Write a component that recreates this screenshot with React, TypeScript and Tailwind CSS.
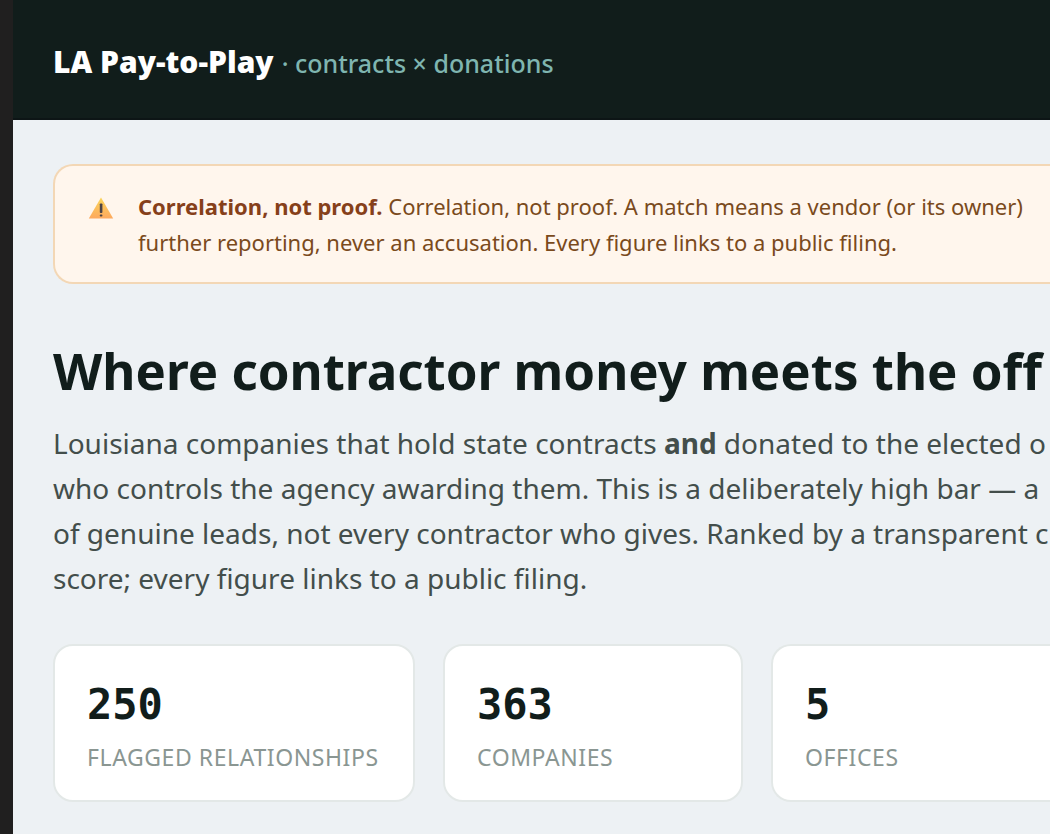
import React from "react";

const stats = [
  { value: "250", label: "FLAGGED RELATIONSHIPS", box: "min-w-[362px] shrink-0 rounded-[20px] border-2" },
  { value: "363", label: "COMPANIES", box: "min-w-[300px] shrink-0 rounded-[20px] border-2" },
  { value: "5", label: "OFFICES", box: "grow rounded-l-[20px] border-2 border-r-0" },
];

function WarningIcon() {
  return (
    <svg viewBox="0 0 26 22" className="mt-[9px] h-[22px] w-[26px] shrink-0" aria-hidden="true">
      <defs>
        <linearGradient id="warn" x1="0" y1="0" x2="0" y2="1">
          <stop offset="0" stopColor="#fbd55a" />
          <stop offset="1" stopColor="#fda95e" />
        </linearGradient>
      </defs>
      <path d="M13 0.5 L25.2 21.5 H0.8 Z" fill="url(#warn)" />
      <rect x="11.8" y="6.5" width="2.6" height="9.5" rx="0.8" fill="#4b4346" />
      <rect x="11.8" y="17.4" width="2.6" height="2.2" rx="0.8" fill="#4b4346" />
    </svg>
  );
}

export default function App() {
  return (
    <div className="flex min-h-screen w-full overflow-hidden bg-[#edf1f4] font-['Noto_Sans',sans-serif]">
      <div className="w-[13px] shrink-0 bg-[#201f1f]"></div>

      <div className="flex min-w-0 grow flex-col">
        <header className="flex h-[120px] items-center border-b-2 border-[#0d1516] bg-[#111d1b] pl-10 pt-1">
          <div className="flex items-baseline gap-2 whitespace-nowrap">
            <span className="text-[30px] font-black text-white">LA Pay-to-Play</span>
            <span className="text-[25px] font-medium text-[#7fb5b0]">· contracts × donations</span>
          </div>
        </header>

        <main className="overflow-hidden whitespace-nowrap pl-10 pt-11">
          <div className="flex gap-6 rounded-l-[20px] border-2 border-r-0 border-[#f3d7b5] bg-[#fff6ed] px-[33px] py-[22px]">
            <WarningIcon />
            <p className="text-[22px] leading-9 text-[#7a4a1c]">
              <strong className="font-bold text-[#86401a]">Correlation, not proof.</strong>{" "}
              Correlation, not proof. A match means a vendor (or its owner)
              <br />
              further reporting, never an accusation. Every figure links to a public filing.
            </p>
          </div>

          <h1 className="mt-[50px] text-[51px] font-bold leading-[72px] text-[#111d1b]">
            Where contractor money meets the off
          </h1>

          <p className="mt-[15px] text-[28px] leading-[45px] text-[#434e4b]">
            Louisiana companies that hold state contracts <strong className="font-bold">and</strong> donated to the elected o
            <br />
            who controls the agency awarding them. This is a deliberately high bar — a
            <br />
            of genuine leads, not every contractor who gives. Ranked by a transparent c
            <br />
            score; every figure links to a public filing.
          </p>

          {/* stat cards */}
          <div className="mt-[43px] flex gap-7">
            {stats.map((s) => (
              <div key={s.label} className={`${s.box} h-[158px] border-[#e3e8e7] bg-white px-8 pt-8`}>
                <div className="font-['DejaVu_Sans_Mono',monospace] text-[42px] font-bold leading-[54px] text-[#111d1b]">
                  {s.value}
                </div>
                <div className="text-[23px] leading-[50px] tracking-wide text-[#8a9692]">{s.label}</div>
              </div>
            ))}
          </div>
        </main>
      </div>
    </div>
  );
}
